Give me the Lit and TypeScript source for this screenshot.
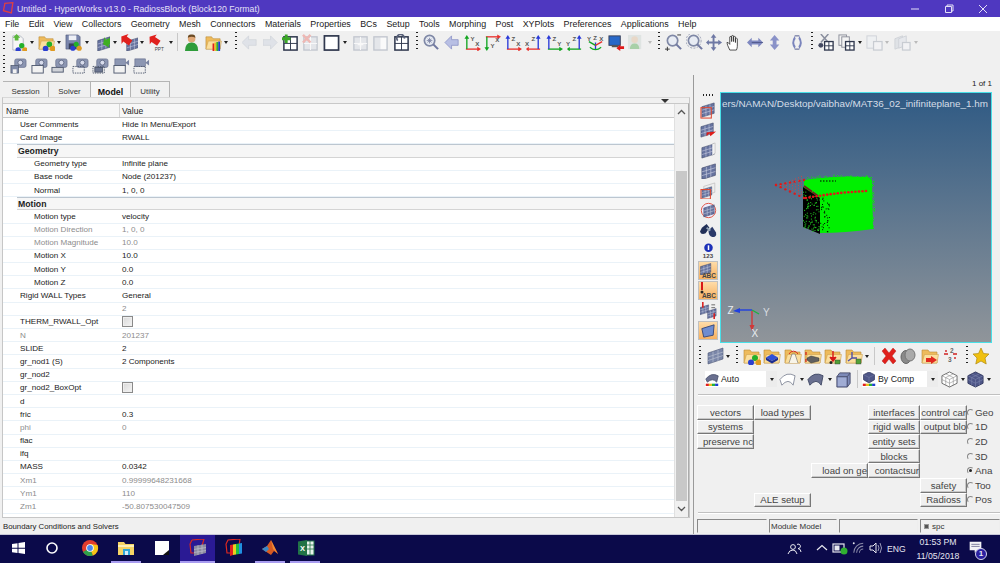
import { LitElement, html, svg, css } from "lit";
import { customElement } from "lit/decorators.js";

// small drawing pieces, all in an 18x18 box
const at = (x: number, y: number, s: number, f: unknown) => svg`<g transform="translate(${x} ${y}) scale(${s})">${f}</g>`;
const mesh = svg`<path d="M0 4L13 0V11L0 15Z" fill="#66739f" stroke="#3d4668" stroke-width=".6"/><path d="M4.300 3V13.500M8.600 1.500V12.500M0 7.700L13 3.700M0 11.300L13 7.300" stroke="#cdd0e2" stroke-width=".6"/>`;
const folder = svg`<path d="M1 3h6l1.500 2H16v11H1Z" fill="#eebb5c" stroke="#b98a35" stroke-width=".6"/><path d="M1 16L3.500 7.500H17.500L16 16Z" fill="#fbdf9e" stroke="#c99a45" stroke-width=".5"/>`;
const balls = svg`<circle cx="11" cy="10" r="3" fill="#22b02a"/><circle cx="7" cy="14.500" r="3" fill="#2b3fd0"/><circle cx="14.500" cy="14.500" r="3" fill="#e09a20"/>`;
const arrow = (c: string) => svg`<path d="M0 9L6 1V5H15V13H6V17Z" fill="${c}"/>`;
const win = svg`<rect x="2" y="3" width="14" height="14" fill="#fff" stroke="#30384e" stroke-width="1.600"/><path d="M9 3V17M2 10H16" stroke="#30384e" stroke-width="1"/>`;
const fadedWin = svg`<rect x="2" y="3" width="14" height="14" fill="#e4e6ea" stroke="#c2c6ce" stroke-width="1.400"/><path d="M9 3V17M2 10H16" stroke="#fafafa" stroke-width="1"/>`;
const lens = (extra: unknown = "") => svg`<circle cx="8" cy="7" r="5.500" fill="#e8ecf4" stroke="#7f88a6" stroke-width="1.800"/><path d="M12 11L17 16" stroke="#7078a0" stroke-width="2.200"/>${extra}`;
const cam = (extra: unknown) => svg`<rect x="5" y="2" width="12" height="9" rx="2" fill="#8c96b2" stroke="#566080" stroke-width=".6"/><circle cx="11" cy="6" r="2.600" fill="#d8dcec" stroke="#4a5470" stroke-width=".7"/>${extra}`;
const movie = (extra: unknown) => svg`<rect x="2" y="2" width="11" height="8" fill="#8c96b2" stroke="#566080" stroke-width=".6"/><path d="M13 6L17 3V9Z" fill="#7a84a2"/>${extra}`;
const frame = svg`<rect x="1" y="9" width="12" height="8" fill="#f2f2f2" stroke="#505a70" stroke-width="1"/>`;
const dashed = svg`<rect x="1" y="10" width="12" height="7" fill="none" stroke="#505a70" stroke-width="1" stroke-dasharray="1.500 1"/>`;
const rainbow = svg`<path d="M1 15H5V18H1Z" fill="#e02020"/><path d="M5 15H9V18H5Z" fill="#e8c020"/><path d="M9 15H13V18H9Z" fill="#20b040"/><path d="M13 15H17V18H13Z" fill="#2040d0"/>`;

const axisText = (x: number, y: number, t: string) => svg`<text x="${x}" y="${y}" font-size="6.500" font-weight="700" font-family="Liberation Sans" fill="#555">${t}</text>`;
const axes = (vc: string, hc: string, vl: string, hl: string, right = false, down = false) => {
  const vx = right ? 14 : 3;
  const hy = down ? 3 : 16;
  const hDir = right ? svg`<path d="M16 ${hy}H3" stroke="${hc}" stroke-width="1.400"/><path d="M1 ${hy}L4 ${hy - 2.500}V${hy + 2.500}Z" fill="${hc}"/>`
    : svg`<path d="M2 ${hy}H15" stroke="${hc}" stroke-width="1.400"/><path d="M18 ${hy}L14 ${hy - 2.500}V${hy + 2.500}Z" fill="${hc}"/>`;
  const vDir = down ? svg`<path d="M${vx} 3V15" stroke="${vc}" stroke-width="1.400"/><path d="M${vx} 18L${vx - 2.500} 14H${vx + 2.500}Z" fill="${vc}"/>`
    : svg`<path d="M${vx} 16V4" stroke="${vc}" stroke-width="1.400"/><path d="M${vx} 1L${vx - 2.500} 5H${vx + 2.500}Z" fill="${vc}"/>`;
  return svg`${hDir}${vDir}${axisText(7, down ? 15 : 7, vl)}${axisText(right ? 0 : 12, down ? 8 : 13, hl)}`;
};

const icons: Record<string, unknown> = {
  imp: svg`<path d="M3 2h8l3 3v12H3Z" fill="#f6f6f6" stroke="#9aa0b0" stroke-width=".7"/><path d="M7 0L11 4H9V7H5V4H3Z" fill="#5cb83c"/>${at(2, 3, .95, balls)}`,
  fball: svg`${folder}${at(1, 1, 1, balls)}`,
  save: svg`<path d="M1 1H14L16 3V16H1Z" fill="#7a86ac" stroke="#4a5474" stroke-width=".6"/><rect x="4" y="1.500" width="8" height="5" fill="#eef0f6"/><rect x="4" y="10" width="8" height="6" fill="#38405c"/>${at(2, 2, .9, balls)}`,
  gmesh: svg`${at(5, 3, 1, mesh)}${at(10, 1, .8, svg`<g transform="rotate(-25 8 9)">${arrow("#3fae22")}</g>`)}`,
  rmesh: svg`${at(6, 4, .95, mesh)}<g transform="rotate(35 7 7) translate(-1 0) scale(.8)">${arrow("#e0201c")}</g>`,
  rppt: svg`<g transform="rotate(35 7 6) scale(.8)">${arrow("#e0201c")}</g><text x="6" y="17.500" font-size="5" font-family="Liberation Sans" fill="#444">PPT</text>`,
  person: svg`<circle cx="7" cy="5" r="4" fill="#e0a878"/><path d="M3 4Q3 0 7 .5Q11 0 11 4Q7 2 3 4Z" fill="#6a4a24"/><path d="M0 18Q0 9 7 9Q14 9 14 18Z" fill="#2e9c3a"/>`,
  frain: svg`${folder}<path d="M8 10H10V18H8Z" fill="#e02020"/><path d="M10 9H12V18H10Z" fill="#e8c020"/><path d="M12 8.500H14V18H12Z" fill="#30b030"/><path d="M14 8H16V18H14Z" fill="#2040d0"/>`,
  gl: svg`<path d="M0 9L7 2V6H15V12H7V16Z" fill="#dfe2e8" stroke="#cdd1d8" stroke-width=".7"/>`,
  gr: svg`<path d="M15 9L8 2V6H0V12H8V16Z" fill="#dfe2e8" stroke="#cdd1d8" stroke-width=".7"/>`,
  wplus: svg`${win}<path d="M0 5H9M4.500 .500V9.500" stroke="#3ca828" stroke-width="3"/>`,
  wx: svg`${fadedWin}<path d="M1 1L9 9M9 1L1 9" stroke="#eeb8b4" stroke-width="2.600"/>`,
  square: svg`<rect x="1.500" y="2" width="15" height="15" fill="#fff" stroke="#30384e" stroke-width="1.800"/>`,
  f1: svg`${fadedWin}<path d="M9 8V14M6 11H12" stroke="#f8f8f8" stroke-width="1.600"/>`,
  f2: svg`<rect x="2" y="3" width="14" height="14" fill="#e4e6ea" stroke="#c2c6ce" stroke-width="1.400"/><rect x="9" y="4" width="6" height="12" fill="#fafafa"/>`,
  wref: svg`${win}<path d="M5 7A4 4 0 1 1 12 5" fill="none" stroke="#586078" stroke-width="1.800"/>`,
  zstar: lens(svg`<path d="M8 4V10M5 7H11M6 5L10 9M10 5L6 9" stroke="#7880a0" stroke-width=".9"/>`),
  bl: svg`<path d="M1 9L8 2V6H15V12H8V16Z" fill="#b8bfe4" stroke="#8890c4" stroke-width=".8"/>`,
  a1: axes("#12a520", "#e8302c", "Y", "X"),
  a2: axes("#12a520", "#e8302c", "Y", "X", false, true),
  a3: axes("#2838d8", "#e8302c", "Z", "X"),
  a4: axes("#2838d8", "#e8302c", "Z", "X", true),
  a5: axes("#2838d8", "#12a520", "Z", "Y"),
  a6: axes("#2838d8", "#12a520", "Z", "Y", true),
  a7: svg`<path d="M9 9V16" stroke="#2838d8" stroke-width="1.400"/><path d="M9 12L2 8" stroke="#12a520" stroke-width="1.400"/><path d="M9 12L16 8" stroke="#e8302c" stroke-width="1.400"/><path d="M3 14Q9 19 15 14" fill="none" stroke="#12a520" stroke-width="1.200"/>${axisText(0, 7, "Y")}${axisText(6.500, 6, "Z")}${axisText(13, 7, "X")}`,
  mon: svg`<rect x="1" y="2" width="12" height="10" fill="#2868c8" stroke="#384058" stroke-width="1"/><path d="M4 13H11" stroke="#555" stroke-width="2"/><path d="M9 15L13 11V13H17V16H13V18Z" fill="#e01818"/>`,
  pf: svg`<rect x="0" y="1" width="14" height="15" fill="#dfe4e2"/><circle cx="7" cy="6" r="3.500" fill="#e8d8c8"/><path d="M2 16Q2 10 7 10Q12 10 12 16Z" fill="#a8d0a8"/>`,
  zm: lens(svg`<path d="M13 1H17" stroke="#333" stroke-width="1"/><path d="M0 16H5M2.500 13.500V18.500" stroke="#333" stroke-width="1"/>`),
  zc: lens(svg`<circle cx="8" cy="7" r="8" fill="none" stroke="#9298ae" stroke-width="1" stroke-dasharray="2 1.500"/>`),
  pan: svg`<path d="M8 0L11 4H9V8H13V6L17 9L13 12V10H9V14H11L8 18L5 14H7V10H3V12L0 9L3 6V8H7V4H5Z" fill="#6e78a4"/>`,
  hand: svg`<path d="M4 17Q1 11 1 9Q2 8 4 11V3Q5.500 2 6 3V8V2Q7.500 1 8 2V8V3Q9.500 2 10 3V9V5Q11.500 4 12 5V13Q12 15 11 17Z" fill="#fff" stroke="#383838" stroke-width=".9"/>`,
  lr: svg`<path d="M0 9L5 4V7H12V4L17 9L12 14V11H5V14Z" fill="#7f88c0"/><path d="M5 9H17" stroke="#3e4878" stroke-width=".7"/>`,
  ud: svg`<path d="M7 1L12 7H9V11H12L7 17L2 11H5V7H2Z" fill="#8a92c8"/>`,
  rot: svg`<path d="M6 2Q1 9 6 16L7 13Q4 9 7 5ZM11 2Q16 9 11 16L10 13Q13 9 10 5Z" fill="#7a84bc"/><path d="M6 2H11M6 16H11" stroke="#4a5488" stroke-width="1"/>`,
  cut: svg`<path d="M3 0L11 9M11 0L3 9" stroke="#8a8f9e" stroke-width="1.600"/><circle cx="3" cy="12" r="2.600" fill="#444a62"/><rect x="7" y="8" width="9" height="9" fill="#fff" stroke="#30384e" stroke-width="1.400"/><path d="M11.500 8V17M7 12.500H16" stroke="#30384e"/>`,
  copy: svg`<rect x="1" y="1" width="8" height="11" fill="#f4f4f4" stroke="#8c8f9a"/><rect x="4" y="3" width="8" height="11" fill="#f4f4f4" stroke="#8c8f9a"/><rect x="8" y="8" width="9" height="9" fill="#fff" stroke="#30384e" stroke-width="1.400"/><path d="M12.500 8V17M8 12.500H17" stroke="#30384e"/>`,
  paste: svg`<rect x="1" y="2" width="10" height="13" fill="#eef0f2" stroke="#cfd2d8"/><rect x="8" y="8" width="9" height="9" fill="#f2f2f4" stroke="#c8ccd2" stroke-width="1.300"/>`,
  pastef: svg`<path d="M1 5L9 2V13L1 16Z" fill="#dfe2e6" stroke="#cfd2d8"/><path d="M5 5L13 2V12L5 15Z" fill="#e6e8ec" stroke="#cfd2d8"/><rect x="9" y="9" width="8" height="8" fill="#f2f2f4" stroke="#c8ccd2" stroke-width="1.300"/>`,
  c1: cam(svg`<rect x="1" y="9" width="8" height="8" fill="#7f8aa8" stroke="#505a70" stroke-width=".8"/><rect x="3" y="13" width="4" height="4" fill="#f2f2f2"/>`),
  c2: cam(frame),
  c3: cam(svg`<rect x="1" y="11" width="12" height="5" fill="#cfd2d8" stroke="#505a70" stroke-width="1"/>`),
  c4: cam(dashed),
  c5: cam(svg`${dashed}<rect x="3" y="11" width="8" height="5" fill="#6c7690" stroke="#404a60" stroke-width=".8"/>`),
  m1: movie(frame),
  m2: movie(dashed),
  s1: svg`${at(2, 1, 1, mesh)}<rect x="1" y="6" width="11" height="11" fill="none" stroke="#e04830" stroke-width="1.100"/>`,
  s2: svg`${at(1, 1, 1, mesh)}<path d="M17 10L11 15L10 12L7 15V11Z" fill="#e01c18"/>`,
  s3: svg`${at(2, 2, 1, mesh)}<path d="M13 2L16 1V12L13 14" fill="#f2f2f2" stroke="#aaa" stroke-width=".5"/>`,
  s4: svg`${at(2, 2, 1.100, mesh)}`,
  s5: svg`${at(4, 1, .9, svg`<path d="M0 4L13 0V11L0 15Z" fill="#eee" stroke="#aaa" stroke-width=".6"/>`)}${at(2, 5, .8, mesh)}<rect x="1" y="8" width="10" height="10" fill="none" stroke="#e04830" stroke-width="1.100"/>`,
  s6: svg`<circle cx="9" cy="9" r="7.600" fill="#eef" stroke="#e05040" stroke-width="1"/>${at(4, 3, .85, mesh)}`,
  bino: svg`<path d="M2 6L7 2L10 6L6 12Q1 14 0 10Z" fill="#223058"/><path d="M9 9L13 5L17 11Q18 16 13 16Q9 15 9 9Z" fill="#2a3a6a"/><path d="M7 6L11 9" stroke="#9ab" stroke-width="2"/>`,
  info: svg`<circle cx="9" cy="6" r="4.500" fill="#1c30b8"/><rect x="8.200" y="3.500" width="1.600" height="5" fill="#fff"/><text x="3" y="16.500" font-size="6.500" font-weight="700" font-family="Liberation Sans" fill="#444">123</text>`,
  pair: svg`${at(0, 3, .7, mesh)}${at(8, 7, .7, mesh)}<path d="M3 0V6M15 12V18" stroke="#d81818" stroke-width="1.600"/><path d="M12 3H16M12 6H16" stroke="#666" stroke-width="1"/>`,
  sheet: svg`<path d="M3 7L16 3L15 14L5 16Z" fill="#6e8cd0" stroke="#384878" stroke-width="1"/>`,
  mesh2: svg`<path d="M1 6L16 1V12L1 17Z" fill="#7a86a8" stroke="#4e5876" stroke-width=".6"/><path d="M6 4.500V15.500M11 3V14M1 10L16 5M1 13.500L16 8.500" stroke="#b8bed0" stroke-width=".7"/>`,
  fb2: svg`${folder}<path d="M9 7L15 10.500L9 14L3 10.500Z" fill="#3050d8"/><path d="M3 10.500V13L9 16.500L15 13V10.500L9 14Z" fill="#1c2c90"/>`,
  ft: svg`${folder}<path d="M5 16L8 7H11L14 16" fill="#f8f4e8" stroke="#666" stroke-width=".6"/><path d="M5 7A5 5 0 0 1 14 7" fill="none" stroke="#d83020" stroke-width="1"/>`,
  fg: svg`${folder}<path d="M7 9L15 11V14L7 16L3 13V11Z" fill="#606060" stroke="#333" stroke-width=".5"/><path d="M2 5V8M2 12V15" stroke="#d01818" stroke-width="1.200"/>`,
  fr: svg`${folder}<path d="M9 4V13M6 10L9 14L12 10" fill="#d81818" stroke="#d81818" stroke-width="1.400"/><rect x="11" y="13" width="5" height="4" fill="#52a038" stroke="#333" stroke-width=".4"/><circle cx="7" cy="15.500" r="1.500" fill="#222"/>`,
  fa: svg`${folder}<path d="M7 11V5M7 11L3 14M7 11L12 11" stroke="#5050a8" stroke-width="1.400"/><rect x="11" y="12" width="5" height="5" fill="#52a038" stroke="#333" stroke-width=".4"/>`,
  redx: svg`<path d="M2 4L5 1L9 6L13 1L16 4L12 9L16 14L13 17L9 12L5 17L2 14L6 9Z" fill="#e0201c" stroke="#a81410" stroke-width=".4"/>`,
  blob: svg`<ellipse cx="6" cy="10" rx="5" ry="6.500" fill="#8a8a8a" stroke="#666"/><ellipse cx="10" cy="8" rx="5" ry="6" fill="#aaa" stroke="#777"/>`,
  farr: svg`${folder}<path d="M16 13L10 17V15H5V11H10V9Z" fill="#e02a20"/>`,
  nums: svg`<text x="8" y="6" font-size="6.500" font-weight="700" font-family="Liberation Sans" fill="#666">2</text><text x="6" y="15" font-size="6.500" font-weight="700" font-family="Liberation Sans" fill="#666">3</text><path d="M2 7H6M11 7H15" stroke="#d02020" stroke-width="1.600"/><path d="M4 3L4 5M13 10V12" stroke="#d02020" stroke-width="1.400"/>`,
  star: svg`<path d="M9 1L11.500 6.500L17 7L13 11L14.200 17L9 14L3.800 17L5 11L1 7L6.500 6.500Z" fill="#f0c010" stroke="#b08a10" stroke-width=".7"/>`,
  shell: svg`<path d="M1 9Q8 0 17 5L15 15Q10 7 3 15Z" fill="#fff" stroke="#8a8f9e" stroke-width="1"/>`,
  surf: svg`<path d="M1 9Q8 0 17 5L15 15Q10 7 3 15Z" fill="#6a7090" stroke="#444c68" stroke-width="1"/>`,
  auto: svg`<path d="M1 9Q8 0 17 5L15 13Q10 7 3 13Z" fill="#6a7090" stroke="#444c68" stroke-width="1"/>${rainbow}`,
  box: svg`<path d="M5 2H16V13L13 17H2V6Z" fill="#7d8ab8" stroke="#4a5070" stroke-width="1"/><path d="M2 6H13V17M13 6L16 2" fill="none" stroke="#4a5070" stroke-width="1"/><path d="M3 7H12V16H3Z" fill="#a0acd4"/>`,
  wire: svg`<path d="M9 1L17 5V13L9 17L1 13V5Z" fill="#fff" stroke="#6a6a6a"/><path d="M1 5L9 9L17 5M9 9V17M5 3L13 7V15M13 3L5 7V15M1 9L9 13L17 9" fill="none" stroke="#8a8a8a" stroke-width=".6"/>`,
  solid: svg`<path d="M9 1L17 5V13L9 17L1 13V5Z" fill="#4e5688" stroke="#333a60"/><path d="M1 5L9 9L17 5M9 9V17M5 3L13 7V15M13 3L5 7V15M1 9L9 13L17 9" fill="none" stroke="#8088b0" stroke-width=".6"/>`,
  comp: svg`<path d="M9 0L16 3.500V10L9 14L2 10V3.500Z" fill="#4e5688" stroke="#333a60"/><path d="M2 3.500L9 7L16 3.500M9 7V14" fill="none" stroke="#8088b0" stroke-width=".6"/>${rainbow}`,
  hw: svg`<path d="M4 1L16 0L14 7H16" fill="none" stroke="#d82820" stroke-width="1.200"/><path d="M2 5L4 1M2 5L3 14H6" fill="none" stroke="#d82820" stroke-width="1.200"/><path d="M6 7L18 5V14L6 17Z" fill="#8a8aa0"/><path d="M10 6V16M14 5.500V15M6 10.500L18 8.500M6 13.500L18 11.500" stroke="#c8c8d4" stroke-width=".6"/>`,
  hv: svg`<path d="M2 5L4 1L16 0L15 7M2 5L3 14H6" fill="none" stroke="#e02820" stroke-width="1.200"/><path d="M6 6L9 5.500V16L6 17Z" fill="#e02020"/><path d="M9 5.500L12 5V15.500L9 16Z" fill="#e8d020"/><path d="M12 5L15 4.500V15L12 15.500Z" fill="#20c040"/><path d="M15 4.500L18 4V14.500L15 15Z" fill="#2090e0"/>`,
  win10: svg`<path d="M3 5L8.500 4.200V8.700H3ZM9.500 4L16 3V8.700H9.500ZM3 9.700H8.500V14L3 13.300ZM9.500 9.700H16V15L9.500 14.100Z" fill="#fff"/>`,
  cortana: svg`<circle cx="9" cy="9" r="5" fill="none" stroke="#fff" stroke-width="1.600"/>`,
  chrome: svg`<circle cx="9" cy="9" r="8" fill="#e23c2e"/><path d="M9 9L2 13A8 8 0 0 0 12 16.500Z" fill="#2fa04a"/><path d="M9 9L12 16.500A8 8 0 0 0 16.500 6L9 5Z" fill="#f7c518"/><circle cx="9" cy="9" r="3.800" fill="#fff"/><circle cx="9" cy="9" r="2.900" fill="#4a88ee"/>`,
  explorer: svg`<path d="M1 3H7L8.500 5H17V16H1Z" fill="#f6d465"/><rect x="1" y="6" width="16" height="2" fill="#fdf0b8"/><rect x="6" y="10" width="7" height="6" fill="#2fa6d8"/><rect x="8" y="12" width="3" height="4" fill="#d6eef8"/>`,
  sticky: svg`<path d="M2 2H16V12L12 16H2Z" fill="#fff"/><path d="M16 11V16H10Z" fill="#111"/>`,
  matlab: svg`<path d="M1 10L6 7L10 1L14 9L17 15L13 12L10 16Z" fill="#d65a22"/><path d="M1 10L6 7L8 10L5 13Z" fill="#3a8ac8"/><path d="M10 1L14 9L17 15L12 10Z" fill="#ee8c36"/>`,
  excel: svg`<rect x="9" y="2" width="8" height="14" fill="#e8f2ec" stroke="#217346"/><path d="M9 6H17M9 10H17M13 2V16" stroke="#217346" stroke-width=".8"/><path d="M1 2.500L10 1V17L1 15.500Z" fill="#217346"/><text x="3" y="12" font-size="7.500" font-weight="700" font-family="Liberation Sans" fill="#fff">X</text>`,
  people: svg`<circle cx="7" cy="8" r="2.400" fill="none" stroke="#e8e8f0"/><path d="M2 15Q3 11 7 11Q10 11 11 15M11 5.500A2.200 2.200 0 1 1 12 9.500Q15 10 15 13" fill="none" stroke="#e8e8f0"/>`,
  caret: svg`<path d="M4 11L9 6.500L14 11" fill="none" stroke="#e8e8f0" stroke-width="1.200"/>`,
  batt: svg`<rect x="2" y="5" width="11" height="8" fill="none" stroke="#e8e8f0" stroke-width="1.200"/><rect x="3.500" y="6.500" width="5" height="5" fill="#e8e8f0"/><circle cx="13" cy="12" r="3.500" fill="#30b030"/>`,
  wifi: svg`<path d="M4 14A10 10 0 0 1 14 4M7 14A7 7 0 0 1 14 7M10 14A4 4 0 0 1 14 10" fill="none" stroke="#8a8aa8" stroke-width="1.100"/><circle cx="4" cy="4" r="1" fill="#e8e8f0"/>`,
  speaker: svg`<path d="M3 7H6L9 4V14L6 11H3Z" fill="none" stroke="#e8e8f0"/><path d="M11 6Q13 9 11 12M13 4Q16 9 13 14" fill="none" stroke="#9a9ab8"/>`,
  bell: svg`<path d="M2 1H16V11H11L8 14V11H2Z" fill="#f2f2f6"/><path d="M4 4H14M4 6.500H14" stroke="#6a6a90"/>`,
};

const ic = (name: string, size = 18) => html`<svg width="${size}" height="${size}" viewBox="0 0 18 18" aria-hidden="true">${icons[name]}</svg>`;

// a slot list: x position on the page, then what sits there
type Slot = [number, string];
const strip = (items: Slot[], origin: number, end: number, size = 18) => {
  return items.map(([x, kind], i) => {
    const w = (i + 1 < items.length ? items[i + 1][0] : end) - x;
    const pad = i === 0 ? x - origin : 0;
    let inner: unknown = ic(kind, size);
    if (kind === "|") inner = html`<i class="grip"></i>`;
    if (kind === "v") inner = html`<i class="drop"></i>`;
    if (kind === "vf") inner = html`<i class="drop faded"></i>`;
    if (kind === "s") inner = html`<i class="vsep"></i>`;
    return html`<span class="slot" style="width:${w}px;margin-left:${pad}px">${inner}</span>`;
  });
};

const bar1: Slot[] = [[3, "|"], [10, "imp"], [30, "v"], [38, "fball"], [57, "v"], [65, "save"], [85, "v"], [93, "gmesh"], [113, "v"], [121, "rmesh"], [140, "v"], [149, "rppt"], [169, "v"], [177, "s"], [185, "person"], [205, "frain"], [224, "v"], [235, "|"], [242, "gl"], [263, "gr"], [282, "wplus"], [302, "wx"], [323, "square"], [343, "v"], [352, "f1"], [372, "f2"], [393, "wref"], [416, "|"], [422, "zstar"], [444, "bl"], [464, "a1"], [484, "a2"], [505, "a3"], [525, "a4"], [546, "a5"], [566, "a6"], [587, "a7"], [608, "mon"], [628, "pf"], [648, "vf"], [658, "|"], [665, "zm"], [686, "zc"], [706, "pan"], [726, "hand"], [747, "lr"], [768, "ud"], [789, "rot"], [811, "|"], [818, "cut"], [838, "copy"], [858, "v"], [866, "paste"], [885, "vf"], [894, "pastef"], [914, "vf"]];
const bar2: Slot[] = [[3, "|"], [10, "c1"], [31, "c2"], [51, "c3"], [72, "c4"], [92, "c5"], [113, "m1"], [133, "m2"]];
const side = ["s1", "s2", "s3", "s4", "s5", "s6", "bino", "info", "abc1", "abc2", "pair", "sheet"];
const row3: Slot[] = [[700, "|"], [708, "mesh2"], [727, "v"], [737, "|"], [744, "fball"], [764, "fb2"], [785, "ft"], [805, "fg"], [825, "fr"], [846, "fa"], [866, "v"], [875, "s"], [881, "redx"], [901, "blob"], [922, "farr"], [943, "nums"], [967, "|"], [973, "star"]];
const task: Slot[] = [[9, "win10"], [43, "cortana"], [81, "chrome"], [117, "explorer"], [153, "sticky"], [188, "hw"], [224, "hv"], [261, "matlab"], [297, "excel"]];
const tray: Slot[] = [[786, "people"], [813, "caret"], [831, "batt"], [850, "wifi"], [867, "speaker"]];

type Row = { n: string; v?: string; k?: string };
const rows: Row[] = [
  { n: "User Comments", v: "Hide In Menu/Export" },
  { n: "Card Image", v: "RWALL" },
  { n: "Geometry", k: "group" },
  { n: "Geometry type", v: "Infinite plane", k: "sub" },
  { n: "Base node", v: "Node (201237)", k: "sub" },
  { n: "Normal", v: "1, 0, 0", k: "sub" },
  { n: "Motion", k: "group" },
  { n: "Motion type", v: "velocity", k: "sub" },
  { n: "Motion Direction", v: "1, 0, 0", k: "sub off" },
  { n: "Motion Magnitude", v: "10.0", k: "sub off" },
  { n: "Motion X", v: "10.0", k: "sub" },
  { n: "Motion Y", v: "0.0", k: "sub" },
  { n: "Motion Z", v: "0.0", k: "sub" },
  { n: "Rigid WALL Types", v: "General" },
  { n: "", v: "2", k: "off" },
  { n: "THERM_RWALL_Opt", v: "[]" },
  { n: "N", v: "201237", k: "off" },
  { n: "SLIDE", v: "2" },
  { n: "gr_nod1 (S)", v: "2 Components" },
  { n: "gr_nod2" },
  { n: "gr_nod2_BoxOpt", v: "[]" },
  { n: "d" },
  { n: "fric", v: "0.3" },
  { n: "phi", v: "0", k: "off" },
  { n: "flac" },
  { n: "ifq" },
  { n: "MASS", v: "0.0342" },
  { n: "Xm1", v: "0.99999648231668", k: "off" },
  { n: "Ym1", v: "110", k: "off" },
  { n: "Zm1", v: "-50.807530047509", k: "off" },
];

// col, row in the utility panel grid
const buttons: [string, number, number][] = [
  ["vectors", 1, 1], ["load types", 2, 1], ["interfaces", 4, 1], ["control car", 5, 1],
  ["systems", 1, 2], ["rigid walls", 4, 2], ["output blo", 5, 2],
  ["preserve nc", 1, 3], ["entity sets", 4, 3],
  ["blocks", 4, 4],
  ["load on ge", 3, 5], ["contactsur", 4, 5],
  ["safety", 5, 6],
  ["ALE setup", 2, 7], ["Radioss", 5, 7],
];
// labels the narrow buttons run out of room for sit at the right edge
const tight = ["control car", "output blo", "preserve nc", "load on ge", "contactsur"];
const radios = ["Geo", "1D", "2D", "3D", "Ana", "Too", "Pos"];

// stable pseudo random speckle for the model points
const rnd = (i: number) => {
  const s = Math.sin(i * 12.9898) * 43758.5453;
  return s - Math.floor(s);
};

@customElement("app-root")
export class AppRoot extends LitElement {
  static styles = css`
    :host {
      display: flex;
      flex-direction: column;
      width: 1000px;
      height: 563px;
      overflow: hidden;
      background: #f0f0f0;
      color: #222;
      font: 8.1px "Liberation Sans", Arial, sans-serif;
    }
    .title {
      height: 17px;
      background: #4f38c0;
      color: #e4e0f6;
      display: flex;
      align-items: center;
      font-size: 8.700px;
      flex: none;
    }
    .title .logo { margin: 0 2px 0 2px; display: flex; }
    .title .name { flex: 1; }
    .winbtn { width: 34px; display: flex; justify-content: center; }
    .menu {
      height: 14px;
      background: #fff;
      display: flex;
      align-items: center;
      gap: 9.400px;
      padding-left: 5px;
      font-size: 8.900px;
      flex: none;
      color: #1a1a1a;
    }
    .bar { display: flex; align-items: center; flex: none; height: 22px; box-sizing: border-box; }
    .bar.low { padding-top: 2px; }
    .slot { display: flex; align-items: center; flex: none; }
    .grip {
      width: 2px;
      height: 20px;
      background: repeating-linear-gradient(#222 0 1.500px, transparent 1.500px 4px);
    }
    .drop {
      margin-left: 0;
      border: solid transparent;
      border-width: 3px 2.500px 0;
      border-top-color: #222;
    }
    .drop.faded { border-top-color: #bbb; }
    .vsep { width: 1px; height: 18px; background: #c8c8c8; }
    .main { flex: 1; display: flex; min-height: 0; }
    .left {
      width: 694px;
      flex: none;
      display: flex;
      flex-direction: column;
      padding-top: 6px;
      box-sizing: border-box;
      border-right: 1px solid #9a9a9a;
    }
    .tabs { display: flex; height: 16px; padding-left: 3px; flex: none; align-items: stretch; }
    .tab {
      display: flex;
      align-items: center;
      justify-content: center;
      box-sizing: border-box;
      background: #f0f0f0;
      border: 1px solid #b4b4b4;
      border-bottom: 0;
      border-left: 0;
      font-size: 7.900px;
      color: #333;
      padding-top: 4px;
    }
    .tab.on { font-weight: 700; font-size: 8.800px; color: #111; background: #f6f6f6; }
    .panel {
      flex: 1;
      display: flex;
      flex-direction: column;
      margin-left: 2px;
      margin-right: 3px;
      border: 1px solid #c6c6c6;
      border-top: 1px solid #d8d8d8;
      min-height: 0;
      position: relative;
    }
    .menu-tri {
      position: absolute;
      top: 1px;
      right: 20px;
      border: solid transparent;
      border-width: 4px 4px 0;
      border-top-color: #333;
    }
    .tablewrap {
      flex: 1;
      margin-top: 5px;
      display: flex;
      min-height: 0;
      border-top: 1px solid #c8c8c8;
      border-right: 1px solid #ababab;
    }
    .table { flex: 1; background: #fff; min-width: 0; }
    .head {
      height: 14px;
      display: grid;
      grid-template-columns: 116px 1fr;
      background: #f7f7f7;
      border-bottom: 1px solid #c8c8c8;
      align-items: center;
      font-size: 8.500px;
      box-sizing: border-box;
    }
    .head span { padding-left: 3px; height: 100%; display: flex; align-items: center; }
    .head span + span { border-left: 1px solid #d4d4d4; padding-left: 2px; }
    .row {
      height: 13.200px;
      display: grid;
      grid-template-columns: 119px 1fr;
      box-sizing: border-box;
      border-bottom: 1px solid #eaf2f8;
      align-items: center;
      color: #222;
    }
    .row .n { padding-left: 17px; white-space: nowrap; }
    .row .v { white-space: nowrap; display: flex; align-items: center; }
    .row.sub .n { padding-left: 31px; }
    .row.off { color: #8c8c8c; }
    .row.group {
      font-weight: 700;
      font-size: 8.700px;
      background: #f6f6f6;
      margin-left: 14px;
      border-top: 1px solid #bcc6d0;
      border-bottom: 1px solid #d4d4d4;
      grid-template-columns: 1fr;
    }
    .row.group .n { padding-left: 1px; }
    .check {
      width: 9px;
      height: 9px;
      border: 1px solid #8a8a8a;
      background: linear-gradient(135deg, #d8d8d8, #f4f4f4);
      box-shadow: inset 0 0 0 1px #eee;
    }
    .scroll {
      width: 13px;
      flex: none;
      background: #f0f0f0;
      display: flex;
      flex-direction: column;
      align-items: center;
      border-left: 1px solid #e0e0e0;
    }
    .scroll svg { flex: none; margin: 5px 0 9px; }
    .scroll .track { flex: 1; width: 11px; margin-top: 47px; background: #c8c8c8; }
    .scroll .end { margin: 5px 0; }
    .status { height: 16px; flex: none; padding: 0 3px; display: flex; align-items: center; font-size: 7.800px; }
    .right { flex: 1; display: flex; flex-direction: column; min-width: 0; }
    .count { height: 17px; flex: none; display: flex; justify-content: flex-end; align-items: center; padding-right: 8px; font-size: 8px; }
    .work { display: flex; height: 251px; flex: none; }
    .side { width: 26px; flex: none; display: flex; flex-direction: column; align-items: center; box-sizing: border-box; padding-left: 2px; }
    .side .dots {
      width: 10px;
      height: 2px;
      margin: 2px 0 4px;
      flex: none;
      background: repeating-linear-gradient(90deg, #222 0 1.500px, transparent 1.500px 3px);
    }
    .side .cell { height: 20px; width: 21px; display: flex; align-items: center; justify-content: center; flex: none; }
    .abc {
      width: 20px;
      height: 19px;
      box-sizing: border-box;
      background: linear-gradient(#ffdca8, #f6b060);
      border: 1px solid #c0c0c0;
      position: relative;
      display: block;
    }
    .abc b { position: absolute; right: 1px; bottom: 0; font-size: 6.500px; color: #444; line-height: 7px; }
    .abc svg { display: block; }
    .view {
      width: 272px;
      box-sizing: border-box;
      border: 1px solid #48e0e8;
      background: linear-gradient(#2f5a84, #90959a);
      position: relative;
      overflow: hidden;
    }
    .path {
      display: flex;
      justify-content: flex-end;
      padding: 5px 3px 0 0;
      color: #d6dee8;
      font-size: 9.900px;
      white-space: nowrap;
    }
    .view svg { position: absolute; left: 0; top: 0; }
    .tools { height: 24px; display: flex; align-items: center; flex: none; margin-top: 1px; }
    .tools2 { height: 20px; display: flex; align-items: center; flex: none; padding-left: 11px; margin-top: 1px; }
    .combo {
      background: #fff;
      height: 16px;
      display: flex;
      align-items: center;
      flex: none;
      box-sizing: border-box;
      font-size: 8.800px;
      gap: 2px;
    }
    .combo .txt { flex: 1; }
    .combo .btn { width: 11px; height: 100%; background: #ececec; display: flex; align-items: center; justify-content: center; }
    .rule { height: 1px; background: #c0c0c0; margin: 5px 0 10px 4px; flex: none; box-shadow: 0 1px 0 #fff; }
    .pad {
      display: grid;
      grid-template-columns: 57px 57px 57px 52px 47px 1fr;
      grid-template-rows: repeat(7, 14.600px);
      padding-left: 3px;
      flex: none;
    }
    .pad button {
      font: 9.600px "Liberation Sans", Arial, sans-serif;
      color: #444;
      background: #f0f0f0;
      border: 0;
      border-top: 1px solid #fff;
      border-left: 1px solid #fff;
      border-right: 1px solid #777;
      border-bottom: 1px solid #777;
      box-shadow: inset -1px -1px 0 #c8c8c8;
      padding: 0 1px;
      margin: 0;
      overflow: hidden;
      white-space: nowrap;
      display: flex;
      align-items: center;
      justify-content: safe center;
    }
    .pad button.tight { justify-content: flex-end; padding: 0; }
    .radio {
      grid-column: 6;
      display: flex;
      align-items: center;
      gap: 1px;
      font-size: 9.800px;
      color: #444;
      white-space: nowrap;
    }
    .radio i {
      width: 5px;
      height: 5px;
      border-radius: 50%;
      border: 1px solid #888;
      border-right-color: #eee;
      border-bottom-color: #eee;
      background: #f0f0f0;
      flex: none;
      box-sizing: content-box;
      position: relative;
    }
    .radio.on i::after {
      content: "";
      position: absolute;
      left: 1px;
      top: 1px;
      width: 3px;
      height: 3px;
      border-radius: 50%;
      background: #222;
    }
    .cells { display: flex; gap: 2px; padding: 6px 0 0 3px; height: 14px; flex: none; }
    .cells div {
      box-sizing: border-box;
      border: 1px solid #888;
      border-right-color: #eee;
      border-bottom-color: #eee;
      font-size: 8px;
      display: flex;
      align-items: center;
      padding-left: 1px;
      color: #333;
      white-space: nowrap;
    }
    .dot { width: 3px; height: 3px; background: #555; border: 1px solid #999; margin: 0 3px 0 2px; }
    .task {
      height: 29px;
      flex: none;
      background: #0b0a4a;
      border-top: 1px solid #c8c8d8;
      box-sizing: border-box;
      display: flex;
      align-items: center;
      position: relative;
      color: #e6e6f2;
    }
    .active { position: absolute; left: 180px; top: 0; width: 35px; height: 28px; background: #2a1a94; }
    .under { position: absolute; bottom: 0; height: 2px; background: #a89cf0; }
    .task .slot { position: relative; top: -1px; }
    .eng { margin-left: 2px; width: 29px; font-size: 8.600px; flex: none; }
    .clock { width: 44px; flex: none; text-align: center; font-size: 8.700px; line-height: 14px; }
    .note { margin-left: 8px; display: flex; position: relative; top: -1px; }
    .note b {
      position: absolute;
      right: -4px;
      bottom: -4px;
      width: 12px;
      height: 12px;
      border-radius: 50%;
      background: #2a20a0;
      border: 1px solid #d8d8f0;
      box-sizing: border-box;
      font-size: 8px;
      line-height: 10px;
      text-align: center;
    }
  `;

  // viewBox uses page coordinates so the model can be read off the reference
  private scene() {
    const dots = [];
    for (let i = 0; i < 18; i++) {
      const t = i / 17;
      dots.push(svg`<circle cx="${806 + t * 60}" cy="${198 - t * 7 - Math.sin(t * 3.1) * 1}" r="1.300" fill="#e01818"/>`);
    }
    for (let i = 0; i < 7; i++) {
      const t = i / 6;
      dots.push(svg`<circle cx="${776 + t * 28}" cy="${185 - t * 5}" r="1.200" fill="#e01818"/>`);
      dots.push(svg`<circle cx="${776 + t * 28}" cy="${185 + t * 13}" r="1.200" fill="#e01818"/>`);
    }
    for (let x = 0; x < 8; x++) {
      for (let y = 0; y <= x; y++) {
        dots.push(svg`<rect x="${780 + x * 3}" y="${185 + (y - x / 2) * 2.600}" width="1" height="1" fill="#c84848"/>`);
      }
    }
    const speck = [];
    for (let i = 0; i < 130; i++) {
      const x = 803 + rnd(i) * 26;
      const y = 190 + rnd(i + 300) * 42;
      speck.push(svg`<rect x="${x.toFixed(1)}" y="${y.toFixed(1)}" width="1" height="1" fill="${x < 820 ? "#22cc22" : "#000"}"/>`);
    }
    // rough outline of the point cloud
    for (let i = 0; i < 70; i++) {
      const t = rnd(i + 700);
      const top = i % 2 === 0;
      const x = top ? 806 + t * 66 : 871 + rnd(i + 900) * 3;
      const y = top ? 176 + rnd(i + 800) * 3 - Math.sin(t * 3.1) * 1.500 : 180 + t * 50;
      speck.push(svg`<rect x="${x.toFixed(1)}" y="${y.toFixed(1)}" width="1" height="1" fill="#00f000"/>`);
    }
    return html`<svg width="270" height="249" viewBox="721 93 270 249" aria-hidden="true">
      <path d="M804 180Q835 175 868 177L872 180L873 229Q845 233 820 233L803 226Z" fill="#00f000"/>
      <path d="M803 187L820 198V234L803 227Z" fill="#000"/>
      <path d="M804 186L818 196" stroke="#702020" stroke-width="2"/>
      <path d="M820 181H836" stroke="#000" stroke-dasharray="1.500 1.500"/>
      ${speck}${dots}
      <path d="M752 310H738" stroke="#2040e0" stroke-width="1.400"/><path d="M733 311L740 308V313Z" fill="#2040e0"/>
      <path d="M752 311V328" stroke="#d03838" stroke-width="1.400"/><path d="M752 331L749.500 325H754.500Z" fill="#d03838"/>
      <path d="M752 310L759 314" stroke="#20b040" stroke-width="1.400"/>
      <text x="727.500" y="314" font-size="10" fill="#e8ecf0" font-family="Liberation Sans">Z</text>
      <text x="763" y="316" font-size="10" fill="#d8dce0" font-family="Liberation Sans">Y</text>
      <text x="751.500" y="337" font-size="10" fill="#e8ecf0" font-family="Liberation Sans">X</text>
    </svg>`;
  }

  private sideIcon(name: string) {
    if (name === "abc1") return html`<span class="abc">${ic("s4", 13)}<b>ABC</b></span>`;
    if (name === "abc2") {
      return html`<span class="abc"><svg width="8" height="12" viewBox="0 0 8 12" aria-hidden="true"><path d="M3 0V8" stroke="#d81818" stroke-width="2"/><circle cx="3" cy="10" r="1.500" fill="#222"/></svg><b>ABC</b></span>`;
    }
    if (name === "sheet") return html`<span class="abc">${ic("sheet", 17)}</span>`;
    return ic(name, 17);
  }

  render() {
    return html`
      <div class="title">
        <span class="logo"><svg width="13" height="13" viewBox="0 0 18 18" aria-hidden="true"><path d="M4 2L15 1L13 15L2 12Z" fill="none" stroke="#e04040" stroke-width="1.800"/></svg></span>
        <span class="name">Untitled - HyperWorks v13.0 - RadiossBlock (Block120 Format)</span>
        <span class="winbtn"><svg width="10" height="10" viewBox="0 0 10 10" aria-hidden="true"><path d="M1 5H9" stroke="#e4e0f6"/></svg></span>
        <span class="winbtn"><svg width="10" height="10" viewBox="0 0 10 10" aria-hidden="true"><path d="M1.500 2.500H7.500V8.500H1.500ZM3 2.500V1H9V7H7.500" fill="none" stroke="#e4e0f6"/></svg></span>
        <span class="winbtn"><svg width="10" height="10" viewBox="0 0 10 10" aria-hidden="true"><path d="M1 1L9 9M9 1L1 9" stroke="#e4e0f6"/></svg></span>
      </div>
      <div class="menu">
        ${["File", "Edit", "View", "Collectors", "Geometry", "Mesh", "Connectors", "Materials", "Properties", "BCs", "Setup", "Tools", "Morphing", "Post", "XYPlots", "Preferences", "Applications", "Help"].map((m) => html`<span>${m}</span>`)}
      </div>
      <div class="bar">${strip(bar1, 0, 930, 17)}</div>
      <div class="bar low">${strip(bar2, 0, 152, 17)}</div>
      <div class="main">
        <div class="left">
          <div class="tabs">
            ${[["Session", 46], ["Solver", 42], ["Model", 40], ["Utility", 39]].map(([t, w]) => html`<span class="tab ${t === "Model" ? "on" : ""}" style="width:${w}px">${t}</span>`)}
          </div>
          <div class="panel">
            <i class="menu-tri"></i>
            <div class="tablewrap">
              <div class="table">
                <div class="head"><span>Name</span><span>Value</span></div>
                ${rows.map((r) => html`
                  <div class="row ${r.k ?? ""}">
                    <span class="n">${r.n}</span>
                    ${r.k === "group" ? "" : html`<span class="v">${r.v === "[]" ? html`<i class="check"></i>` : r.v}</span>`}
                  </div>`)}
              </div>
              <div class="scroll">
                <svg width="9" height="6" viewBox="0 0 9 6" aria-hidden="true"><path d="M1 5L4.500 1.500L8 5" fill="none" stroke="#555" stroke-width="1.300"/></svg>
                <div class="track"></div>
                <svg class="end" width="9" height="6" viewBox="0 0 9 6" aria-hidden="true"><path d="M1 1L4.500 4.500L8 1" fill="none" stroke="#555" stroke-width="1.300"/></svg>
              </div>
            </div>
          </div>
          <div class="status">Boundary Conditions and Solvers</div>
        </div>
        <div class="right">
          <div class="count">1 of 1</div>
          <div class="work">
            <div class="side"><i class="dots"></i>${side.map((s) => html`<span class="cell">${this.sideIcon(s)}</span>`)}</div>
            <div class="view">
              <div class="path">ers/NAMAN/Desktop/vaibhav/MAT36_02_inifiniteplane_1.hm</div>
              ${this.scene()}
            </div>
          </div>
          <div class="tools">${strip(row3, 695, 995)}</div>
          <div class="tools2">
            <div class="combo" style="width:72px">${ic("auto", 14)}<span class="txt">Auto</span><span class="btn"><i class="drop"></i></span></div>
            <span class="slot" style="width:21px;margin-left:2px">${ic("shell", 17)}</span><span class="slot" style="width:7px"><i class="drop"></i></span>
            <span class="slot" style="width:21px">${ic("surf", 17)}</span><span class="slot" style="width:7px"><i class="drop"></i></span>
            <span class="slot" style="width:22px">${ic("box", 17)}</span>
            <span class="slot" style="width:5px"><i class="vsep"></i></span>
            <div class="combo" style="width:76px">${ic("comp", 14)}<span class="txt">By Comp</span><span class="btn"><i class="drop"></i></span></div>
            <span class="slot" style="width:20px;margin-left:3px">${ic("wire", 17)}</span><span class="slot" style="width:6px"><i class="drop"></i></span>
            <span class="slot" style="width:20px">${ic("solid", 17)}</span><span class="slot" style="width:6px"><i class="drop"></i></span>
          </div>
          <div class="rule"></div>
          <div class="pad">
            ${buttons.map(([t, c, r]) => html`<button class="${tight.includes(t) ? "tight" : ""}" style="grid-column:${c};grid-row:${r}">${t}</button>`)}
            ${radios.map((t, i) => html`<span class="radio ${t === "Ana" ? "on" : ""}" style="grid-row:${i + 1}"><i></i>${t}</span>`)}
          </div>
          <div class="rule" style="margin:5px 0 0 4px"></div>
          <div class="cells">
            <div style="width:70px"></div>
            <div style="width:68px">Module Model</div>
            <div style="width:79px"></div>
            <div style="width:80px"><i class="dot"></i>spc</div>
          </div>
        </div>
      </div>
      <div class="task">
        <span class="active"></span>
        <span class="under" style="left:111px;width:30px"></span>
        <span class="under" style="left:180px;width:35px"></span>
        <span class="under" style="left:255px;width:30px"></span>
        <span class="under" style="left:290px;width:30px"></span>
        ${strip(task, 0, 786)}
        ${strip(tray, 786, 885)}
        <span class="eng">ENG</span>
        <span class="clock">01:53 PM<br />11/05/2018</span>
        <span class="note">${ic("bell", 15)}<b>1</b></span>
      </div>
    `;
  }
}
